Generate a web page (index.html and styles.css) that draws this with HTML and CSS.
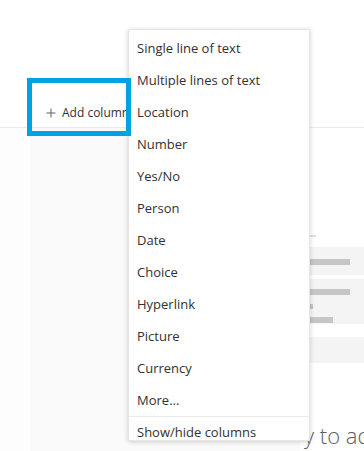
FILE: index.html
```html
<!DOCTYPE html>
<html>

<head>
    <meta charset="UTF-8">
    <title>Add column menu</title>
    <link rel="stylesheet" href="styles.css">
</head>

<body>
    <div class="page">
        <header class="bar">
            <span class="add">
                <svg class="plus" width="10" height="10" viewBox="0 0 10 10">
                    <path d="M5 0.5v9M0.5 5h9" stroke="#605e5c" stroke-width="1" fill="none" />
                </svg>Add column</span>
        </header>

        <main class="content">
            <div class="rail"></div>
            <div class="pane"></div>
            <div class="list">
                <div class="tick"></div>
                <div class="row r1"><div class="line long"></div></div>
                <div class="row r2">
                    <div class="line long"></div>
                    <div class="line tiny"></div>
                    <div class="line mid"></div>
                </div>
                <div class="row r3"></div>
                <p class="hint">y to add</p>
            </div>
        </main>

        <div class="focus"></div>

        <ul class="menu">
            <li>Single line of text</li>
            <li>Multiple lines of text</li>
            <li>Location</li>
            <li>Number</li>
            <li>Yes/No</li>
            <li>Person</li>
            <li>Date</li>
            <li>Choice</li>
            <li>Hyperlink</li>
            <li>Picture</li>
            <li>Currency</li>
            <li>More...</li>
            <li class="sep">Show/hide columns</li>
        </ul>
    </div>
</body>

</html>
```

FILE: styles.css
```css
html,
body {
    margin: 0;
    background: #fff;
}

.page {
    position: relative;
    width: 364px;
    height: 451px;
    overflow: hidden;
    font-family: "Open Sans", "Noto Sans", sans-serif;
    color: #323130;
}

/* header with the add column command */
.bar {
    height: 128px;
    border-bottom: 1px solid #edebe9;
    box-sizing: border-box;
    display: flex;
    align-items: flex-end;
    padding: 0 0 4px 46px;
}

.add {
    display: flex;
    align-items: center;
    font-size: 12px;
    white-space: nowrap;
    line-height: 20px;
}

.plus {
    margin-right: 6px;
}

/* list area */
.content {
    display: grid;
    grid-template-columns: 30px 270px 1fr;
    height: 323px;
}

.rail {
    background: #fdfdfd;
}

.pane {
    background: #fafafa;
}

.list {
    display: flex;
    flex-direction: column;
    overflow: hidden;
}

.tick {
    width: 16px;
    height: 2px;
    background: #e1dfdd;
    margin: 107px 0 10px;
}

.row {
    background: #f4f4f4;
    display: flex;
    flex-direction: column;
}

.r1 {
    height: 29px;
    margin-bottom: 4px;
}

.r2 {
    height: 46px;
    margin-bottom: 13px;
}

.r3 {
    height: 27px;
}

.line {
    height: 6px;
    background: #c8c6c4;
}

.r1 .line {
    margin-top: 12px;
}

.r2 .long {
    margin-top: 10px;
}

.long {
    width: 50px;
}

.tiny {
    width: 13px;
    height: 5px;
    margin-top: 9px;
}

.mid {
    width: 33px;
    margin-top: 8px;
}

.hint {
    margin: 56px 0 0 4px;
    font-size: 22px;
    font-weight: 300;
    color: #605e5c;
    white-space: nowrap;
    line-height: 32px;
}

/* highlight drawn over the command */
.focus {
    position: absolute;
    left: 27px;
    top: 78px;
    width: 104px;
    height: 58px;
    border: 5px solid #00a2e2;
    box-sizing: border-box;
    z-index: 2;
}

/* dropdown */
.menu {
    position: absolute;
    left: 128px;
    top: 29px;
    width: 182px;
    height: 412px;
    margin: 0;
    padding: 2px 0 0;
    list-style: none;
    box-sizing: border-box;
    background: #fff;
    border: 1px solid #e6e6e6;
    box-shadow: 0 1px 5px rgba(0, 0, 0, 0.18);
    font-size: 13px;
    z-index: 1;
}

.menu li {
    height: 32px;
    line-height: 32px;
    padding-left: 8px;
    white-space: nowrap;
}

.menu .sep {
    border-top: 1px solid #edebe9;
    height: 22px;
    padding-top: 4px;
    line-height: 22px;
}
```
